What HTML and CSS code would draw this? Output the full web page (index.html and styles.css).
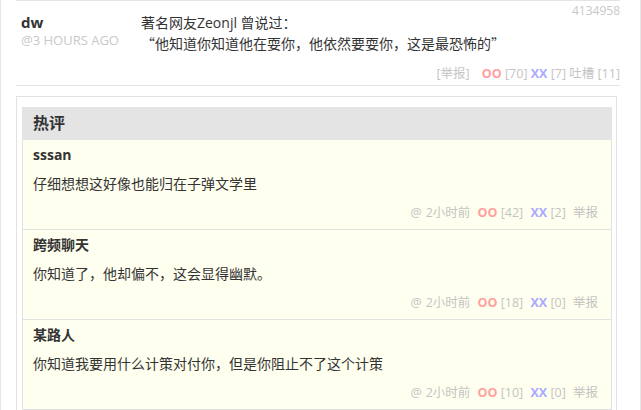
FILE: index.html
```html
<!DOCTYPE html>
<html lang="zh-CN">
<head>
<meta charset="utf-8">
<title>热评</title>
<link rel="stylesheet" href="styles.css">
</head>
<body>
<div class="page">
  <div class="post">
    <span class="post-id">4134958</span>
    <div class="post-main">
      <div class="author">
        <div class="author-name">dw</div>
        <div class="author-time">@3 HOURS AGO</div>
      </div>
      <div class="post-text">
        <p>著名网友Zeonjl 曾说过：</p>
        <p><span class="cjk">“</span>他知道你知道他在耍你，他依然要耍你，这是最恐怖的<span class="cjk">”</span></p>
      </div>
    </div>
    <div class="post-vote">
      <span class="gray">[举报]</span>
      <span class="oo gap">OO</span> <span class="gray">[70]</span>
      <span class="xx">XX</span> <span class="gray">[7]</span>
      <span class="gray">吐槽 [11]</span>
    </div>
  </div>

  <div class="hot">
    <div class="hot-title">热评</div>
    <div class="comment">
      <div class="c-name">sssan</div>
      <div class="c-text">仔细想想这好像也能归在子弹文学里</div>
      <div class="c-foot">
        <span class="gray"><span class="at">@</span>2小时前</span>
        <span class="g"><span class="oo">OO</span> <span class="gray">[42]</span></span>
        <span class="g"><span class="xx">XX</span> <span class="gray">[2]</span></span>
        <span class="g gray">举报</span>
      </div>
    </div>
    <div class="comment">
      <div class="c-name">跨频聊天</div>
      <div class="c-text">你知道了，他却偏不，这会显得幽默。</div>
      <div class="c-foot">
        <span class="gray"><span class="at">@</span>2小时前</span>
        <span class="g"><span class="oo">OO</span> <span class="gray">[18]</span></span>
        <span class="g"><span class="xx">XX</span> <span class="gray">[0]</span></span>
        <span class="g gray">举报</span>
      </div>
    </div>
    <div class="comment">
      <div class="c-name">某路人</div>
      <div class="c-text">你知道我要用什么计策对付你，但是你阻止不了这个计策</div>
      <div class="c-foot">
        <span class="gray"><span class="at">@</span>2小时前</span>
        <span class="g"><span class="oo">OO</span> <span class="gray">[10]</span></span>
        <span class="g"><span class="xx">XX</span> <span class="gray">[0]</span></span>
        <span class="g gray">举报</span>
      </div>
    </div>
  </div>
</div>
</body>
</html>
```
FILE: styles.css
```css
html, body {
  margin: 0;
  padding: 0;
  background: #fff;
}
body {
  font-family: "Open Sans", "Noto Sans CJK SC", sans-serif;
  color: #333;
  font-size: 14px;
}
p { margin: 0; }
.cjk { font-family: "Noto Sans CJK SC", sans-serif; }

.page {
  box-sizing: border-box;
  width: 641px;
  min-height: 410px;
  border-left: 1px solid #e6e6e6;
  border-right: 1px solid #e6e6e6;
  padding: 0 20px 0 15px;
  overflow: hidden;
}

.post {
  position: relative;
  border-top: 1px solid #e4e4e4;
  border-bottom: 1px solid #e4e4e4;
  padding: 11px 0 3px 0;
}
.post-id {
  position: absolute;
  right: 0;
  top: 2px;
  font-size: 12px;
  line-height: 16px;
  color: #c8c8c8;
}
.post-main {
  display: flex;
}
.author {
  width: 125px;
  flex: none;
  padding-left: 5px;
  box-sizing: border-box;
}
.author-name {
  font-weight: 700;
  font-size: 15px;
  line-height: 20px;
  color: #333;
}
.author-time {
  font-size: 13px;
  line-height: 16px;
  color: #c8c8c8;
}
.post-text {
  font-size: 14px;
  line-height: 21px;
  color: #333;
}
.post-vote {
  margin-top: 12px;
  text-align: right;
  font-size: 12.5px;
  line-height: 16px;
}
.gray { color: #c4c4c4; }
.oo { color: #ff9f9f; font-weight: 700; }
.xx { color: #a9a9ff; font-weight: 700; }
.gap { margin-left: 9px; }

.hot {
  margin-top: 10px;
  margin-right: 3px;
  border: 1px solid #e2e2e2;
  padding: 10px 4px 0 5px;
}
.hot-title {
  height: 33px;
  line-height: 33px;
  background: #e4e4e4;
  padding-left: 11px;
  font-size: 16px;
  font-weight: 700;
  color: #333;
}
.comment {
  background: #ffffef;
  border: 1px solid #e2e2e2;
  border-top: none;
  padding: 5px 13px 8px 10px;
}
.c-name {
  font-size: 14px;
  font-weight: 700;
  line-height: 20px;
  color: #333;
}
.c-text {
  margin-top: 9px;
  font-size: 14px;
  line-height: 20px;
  color: #333;
}
.c-foot {
  margin-top: 11px;
  text-align: right;
  font-size: 12.5px;
  line-height: 16px;
}
.c-foot .at { margin-right: 4px; }
.c-foot .g { margin-left: 4px; }
```
